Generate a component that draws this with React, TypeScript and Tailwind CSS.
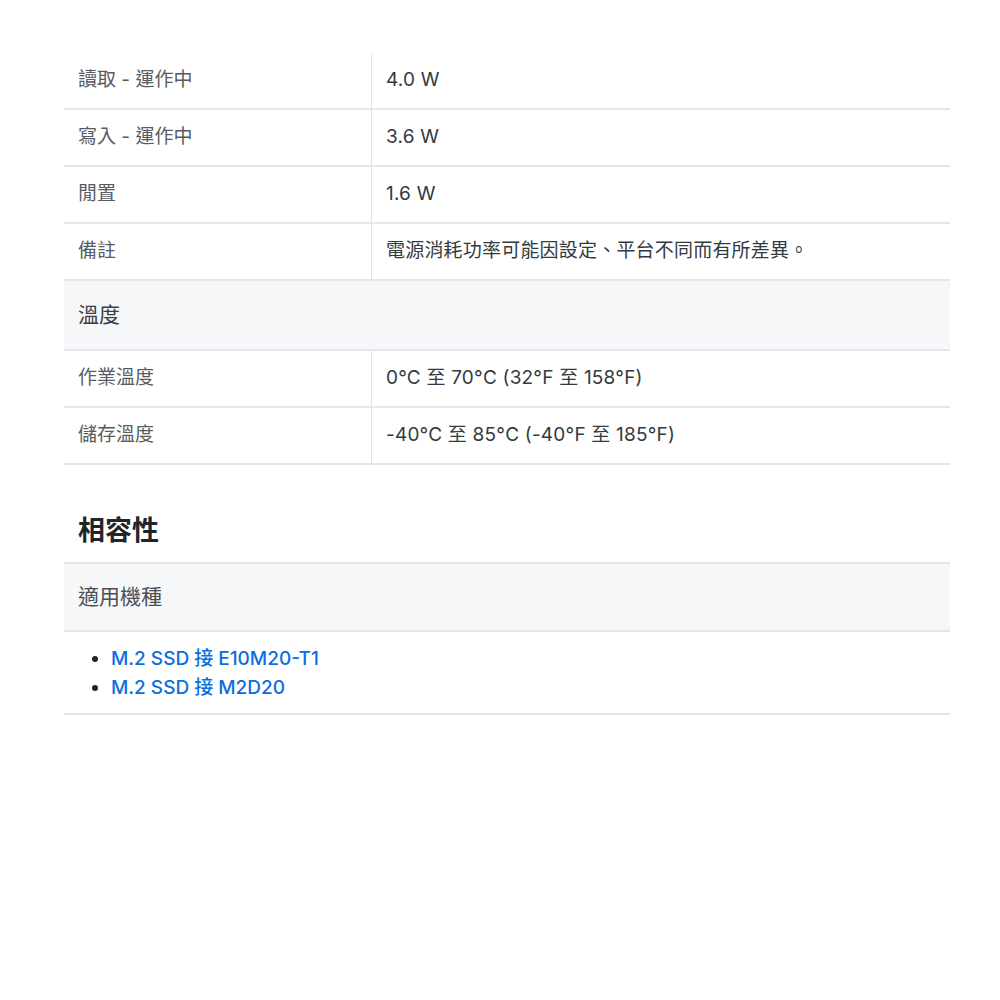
import React from "react";

const font = { fontFamily: '"Inter", "Noto Sans CJK TC", sans-serif' };

function Row({ label, value }: { label: string; value: string }) {
  return (
    <div className="flex border-b-2 border-[#e3e6ea]">
      <div className="w-[308px] shrink-0 border-r border-[#dfe2e6] pl-[14px] h-[55px] flex items-center text-[19px] text-[#575c62]">
        {label}
      </div>
      <div className="flex-1 pl-[14px] h-[55px] flex items-center text-[19px] tracking-[0.2px] text-[#343a40]">{value}</div>
    </div>
  );
}

export default function App() {
  return (
    <div className="min-h-[1000px] bg-white" style={font}>
      <div className="ml-[64px] w-[886px] pt-[53px]">
        <Row label="讀取 - 運作中" value="4.0 W" />
        <Row label="寫入 - 運作中" value="3.6 W" />
        <Row label="閒置" value="1.6 W" />
        <Row label="備註" value="電源消耗功率可能因設定、平台不同而有所差異。" />
        <div className="h-[70px] bg-[#f6f7f9] border-b-2 border-[#e3e6ea] pl-[14px] flex items-center text-[21px] text-[#3a3f45]">
          溫度
        </div>
        <Row label="作業溫度" value="0°C 至 70°C (32°F 至 158°F)" />
        <Row label="儲存溫度" value="-40°C 至 85°C (-40°F 至 185°F)" />

        <h2 className="mt-[48px] pl-[14px] text-[27px] font-bold text-[#212529] leading-[36px]">相容性</h2>

        <div className="mt-[13px] border-t-2 border-[#e3e6ea] h-[70px] bg-[#f6f7f9] border-b-2 pl-[14px] flex items-center text-[21px] text-[#4a4f55]">
          適用機種
        </div>
        <div className="border-b-2 border-[#e3e6ea] pt-[12px] pb-[11px]">
          <ul className="list-disc pl-[47px] text-[19px] leading-[29px] text-[#212529]">
            <li><a className="text-[#0a6ee0] font-medium">M.2 SSD 接 E10M20-T1</a></li>
            <li><a className="text-[#0a6ee0] font-medium">M.2 SSD 接 M2D20</a></li>
          </ul>
        </div>
      </div>
    </div>
  );
}
